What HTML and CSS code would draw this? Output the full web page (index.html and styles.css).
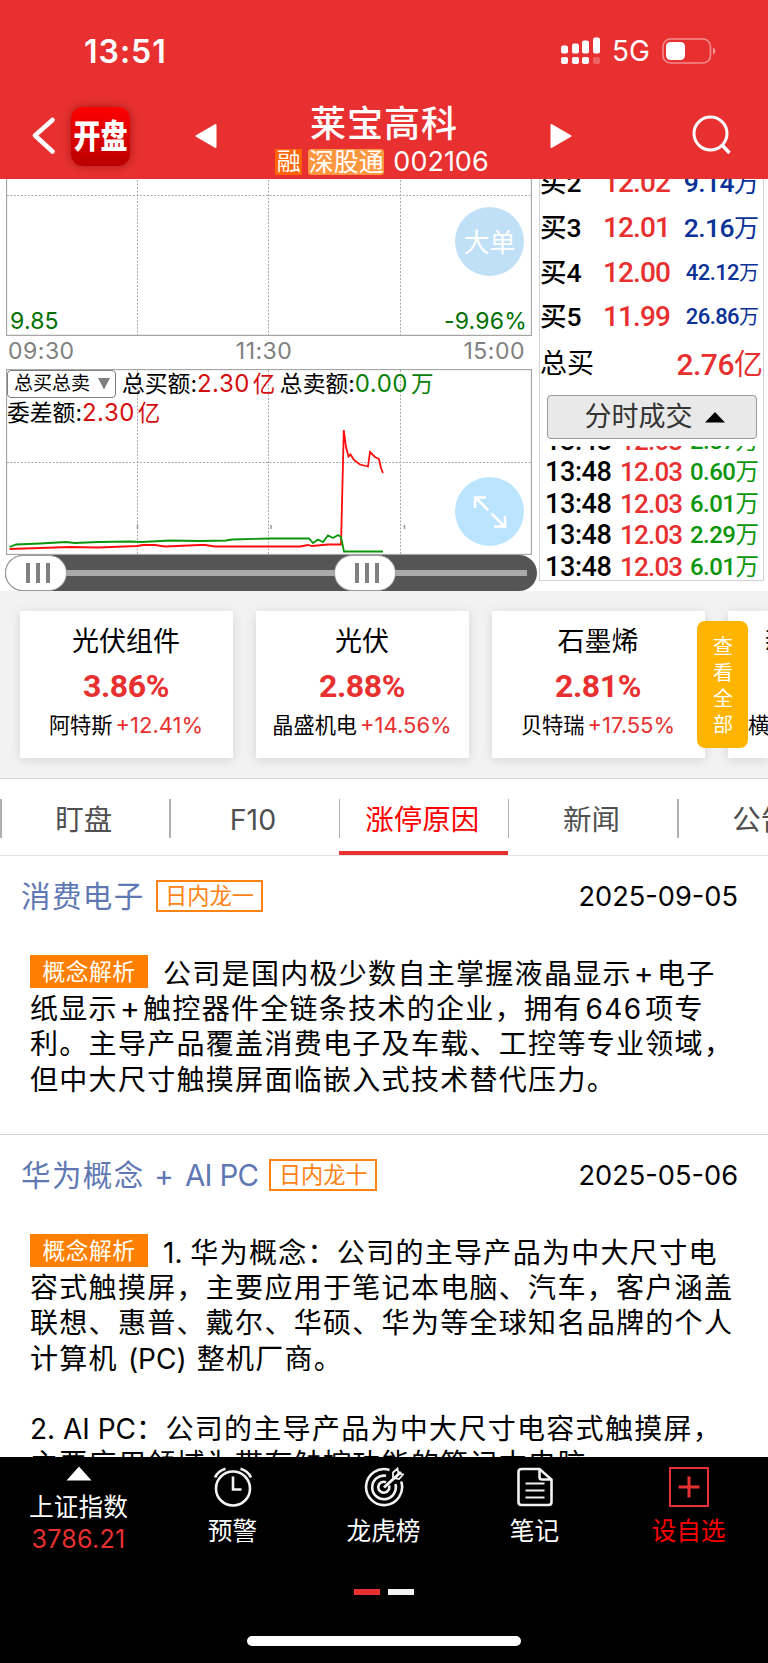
FILE: index.html
```
<!DOCTYPE html>
<html lang="zh-CN">
<head>
    <meta charset="UTF-8">
    <meta name="viewport" content="width=device-width, initial-scale=1.0">
    <title>莱宝高科 002106</title>
    <link rel="stylesheet" href="styles.css">
</head>
<body>
    <header class="header">
        <div class="status-bar">
            <div class="clock">13:51</div>
            <div class="status-icons">
                <svg class="signal" width="40" height="28" viewBox="0 0 40 28" fill="#fff">
                    <rect x="0" y="8.500" width="7" height="8" rx="2"/>
                    <rect x="11" y="6.500" width="7" height="10" rx="2"/>
                    <rect x="21" y="3.500" width="7" height="13" rx="2"/>
                    <rect x="32" y="0.500" width="7" height="16" rx="2"/>
                    <rect x="0" y="20" width="7" height="7" rx="2"/>
                    <rect x="11" y="20" width="7" height="7" rx="2"/>
                    <rect x="21" y="20" width="7" height="7" rx="2"/>
                    <rect x="32" y="20" width="7" height="7" rx="2" opacity=".25"/>
                </svg>
                <span class="network">5G</span>
                <svg class="battery" width="55" height="26" viewBox="0 0 55 26">
                    <rect x="1" y="1" width="47.500" height="24" rx="7.500" fill="none" stroke="#fff" stroke-opacity=".45" stroke-width="1.600"/>
                    <rect x="4" y="4" width="19" height="18" rx="4.500" fill="#fff"/>
                    <path d="M51 9.500q2.500 1 2.500 3.500t-2.500 3.500z" fill="#fff" fill-opacity=".5"/>
                </svg>
            </div>
        </div>
        <div class="title-bar">
            <svg class="back" width="26" height="38" viewBox="0 0 26 38"><path d="M22.500 3 5 18.500 22.500 34.500" fill="none" stroke="#fff" stroke-width="4.500" stroke-linecap="round" stroke-linejoin="round"/></svg>
            <div class="logo"><span>开盘</span></div>
            <svg class="prev" width="22" height="26" viewBox="0 0 22 26"><path d="M20.500 2v22L1.500 13z" fill="#fff" stroke="#fff" stroke-width="2" stroke-linejoin="round"/></svg>
            <div class="stock">
                <div class="stock-name">莱宝高科</div>
                <div class="stock-code"><span class="mark margin">融</span><span class="mark connect">深股通</span><span>002106</span></div>
            </div>
            <svg class="next" width="22" height="26" viewBox="0 0 22 26"><path d="M1.500 2v22L20.500 13z" fill="#fff" stroke="#fff" stroke-width="2" stroke-linejoin="round"/></svg>
            <svg class="search" width="42" height="42" viewBox="0 0 42 42" fill="none" stroke="#fff" stroke-width="3"><circle cx="19.500" cy="19.500" r="16.500"/><path d="M31 31l7.500 8" stroke-width="3.500"/></svg>
        </div>
    </header>

    <section class="market">
        <div class="charts">
            <div class="chart price-chart">
                <svg class="plot" width="526" height="157" viewBox="6 179 526 157" fill="none">
                    <path d="M6.500 179V335.500H531.500V179" stroke="#a6a6a6" stroke-width="1.300"/>
                    <path d="M7 195.500H531M137.500 180V335M268.500 180V335M400.500 180V335" stroke="#aaa" stroke-dasharray="2 1.500"/>
                </svg>
                <span class="low-price">9.85</span>
                <span class="low-rate">-9.96%</span>
                <button class="round-btn big-order">大单</button>
            </div>
            <div class="time-axis"><span>09:30</span><span>11:30</span><span>15:00</span></div>
            <div class="chart volume-chart">
                <svg class="plot" width="526" height="186" viewBox="6 369 526 186" fill="none">
                    <rect x="6.500" y="369.500" width="525" height="185" stroke="#a6a6a6" stroke-width="1.300"/>
                    <path d="M7 462.500H531M137.500 370V555M268.500 370V555M400.500 370V555" stroke="#aaa" stroke-dasharray="2 1.500"/>
                    <path d="M137.500 525v4M271 525v4M404.500 525v4" stroke="#999" stroke-width="1.500"/>
                    <polyline stroke="#ff0d0d" stroke-width="1.800" points="9.600,549 40,548 70,547 98,547.500 137,546 143,545 155,545 165,546.500 200,545 205,545 215,546.500 270,546.500 300,546.500 308,545 312,546 328,544.500 341,544.500 343.800,430 346,447 348.500,456.500 350.500,454.500 354,460 360,464.500 368,466.500 370,452 375,457 379,459 381,468 383,473"/>
                    <polyline stroke="#0a950a" stroke-width="1.800" points="9.600,547 16,544.500 40,543.500 66,542 75,543 98,542 130,541.500 142,542 170,540.500 200,541 226,540.500 232,539.500 270,538.500 309,538.500 313,543 318,539.500 323,542 328,535.500 333,538 338,535 341,537 344,551.500 383,551.500"/>
                </svg>
                <div class="totals">
                    <div class="select">总买总卖<svg width="14" height="14" viewBox="0 0 14 14"><path d="M1 1h12L7 12.500z" fill="#808080"/></svg></div>
                    <span>总买额:<i class="up">2.30<b>亿</b></i></span>
                    <span>总卖额:<i class="down">0.00<b>万</b></i></span>
                    <span class="diff">委差额:<i class="up">2.30<b>亿</b></i></span>
                </div>
                <button class="round-btn expand">
                    <svg width="34" height="34" viewBox="0 0 34 34" fill="none" stroke="#fff" stroke-width="2.600"><path d="M15.500 15.500 3 3M2 13V2.500H13M18.500 18.500 31 31M32 21V31.500H21"/></svg>
                </button>
            </div>
            <div class="slider">
                <div class="rail"></div>
                <div class="handle"><i></i><i></i><i></i></div>
                <div class="handle"><i></i><i></i><i></i></div>
            </div>
        </div>

        <div class="order-book">
            <div class="bids">
                <div class="bid"><span>买2</span><b>12.02</b><em>9.14<u>万</u></em></div>
                <div class="bid"><span>买3</span><b>12.01</b><em>2.16<u>万</u></em></div>
                <div class="bid"><span>买4</span><b>12.00</b><em class="small">42.12<u>万</u></em></div>
                <div class="bid"><span>买5</span><b>11.99</b><em class="small">26.86<u>万</u></em></div>
            </div>
            <div class="bid-total"><span>总买</span><b>2.76<u>亿</u></b></div>
            <button class="deal-btn">分时成交<svg width="20" height="11" viewBox="0 0 20 11"><path d="M0 10.500 10 0l10 10.500z"/></svg></button>
            <div class="deals">
                <div class="deal"><span>13:48</span><b>12.03</b><em>2.87<u>万</u></em></div>
                <div class="deal"><span>13:48</span><b>12.03</b><em>0.60<u>万</u></em></div>
                <div class="deal"><span>13:48</span><b>12.03</b><em>6.01<u>万</u></em></div>
                <div class="deal"><span>13:48</span><b>12.03</b><em>2.29<u>万</u></em></div>
                <div class="deal"><span>13:48</span><b>12.03</b><em>6.01<u>万</u></em></div>
            </div>
        </div>
    </section>

    <section class="concepts">
        <div class="card">
            <h3>光伏组件</h3>
            <strong>3.86%</strong>
            <p>阿特斯<span>+12.41%</span></p>
        </div>
        <div class="card">
            <h3>光伏</h3>
            <strong>2.88%</strong>
            <p>晶盛机电<span>+14.56%</span></p>
        </div>
        <div class="card">
            <h3>石墨烯</h3>
            <strong>2.81%</strong>
            <p>贝特瑞<span>+17.55%</span></p>
        </div>
        <div class="card last">
            <h3>新</h3>
            <p>横店</p>
        </div>
        <div class="view-all">查看全部</div>
    </section>

    <nav class="tabs">
        <a class="tab">盯盘</a>
        <a class="tab">F10</a>
        <a class="tab active">涨停原因</a>
        <a class="tab">新闻</a>
        <a class="tab">公告</a>
    </nav>

    <main class="reasons">
        <article class="reason">
            <div class="reason-head">
                <h2>消费电子</h2>
                <span class="rank">日内龙一</span>
                <time>2025-09-05</time>
            </div>
            <p><span class="tag">概念解析</span>公司是国内极少数自主掌握液晶显示<i class="plus">+</i>电子<br>纸显示<i class="plus">+</i>触控器件全链条技术的企业，拥有<i class="num">646</i>项专<br>利。主导产品覆盖消费电子及车载、工控等专业领域，<br>但中大尺寸触摸屏面临嵌入式技术替代压力。</p>
        </article>
        <article class="reason">
            <div class="reason-head">
                <h2>华为概念 + <span class="latin">AI PC</span></h2>
                <span class="rank">日内龙十</span>
                <time>2025-05-06</time>
            </div>
            <p><span class="tag">概念解析</span><span class="latin">1. </span>华为概念：公司的主导产品为中大尺寸电<br>容式触摸屏，主要应用于笔记本电脑、汽车，客户涵盖<br>联想、惠普、戴尔、华硕、华为等全球知名品牌的个人<br>计算机<span class="latin pc">(PC)</span>整机厂商。</p>
            <p><span class="latin">2. AI PC</span>：公司的主导产品为中大尺寸电容式触摸屏，<br>主要应用领域为带有触控功能的笔记本电脑。</p>
        </article>
    </main>

    <footer class="bottom">
        <div class="bottom-nav">
            <div class="index">
                <svg width="26" height="15" viewBox="0 0 26 15"><path d="M0.500 14.500 13 0.500 25.500 14.500z" fill="#fff"/></svg>
                <div>上证指数</div>
                <div class="index-value">3786.21</div>
            </div>
            <div class="item">
                <svg width="40" height="40" viewBox="0 0 40 40" fill="none" stroke="#f2f2f2" stroke-width="2.600"><circle cx="20" cy="21.500" r="17"/><path d="M20 9.500V22.500H28.500M2 10.500Q5 4 12.500 1.800M38 10.500Q35 4 27.500 1.800"/></svg>
                <span>预警</span>
            </div>
            <div class="item">
                <svg width="40" height="40" viewBox="0 0 40 40" fill="none" stroke="#f2f2f2" stroke-width="2.600"><path d="M25.500 2.900A18 18 0 1 0 37.200 14.500M22 8.800A11.800 11.800 0 1 0 31.300 17M22 15.200A5.500 5.500 0 1 0 25 18.500"/><path d="M20 20.500 37 5" stroke-width="3"/><path d="M29 10.500V5.500L33.500 1.500 34.500 6.500 39 7.500 35 12 29.500 11z" stroke-width="1.800"/></svg>
                <span>龙虎榜</span>
            </div>
            <div class="item">
                <svg width="40" height="40" viewBox="0 0 40 40" fill="none" stroke="#f2f2f2" stroke-width="2.600"><path d="M24.500 2H6.500Q3.500 2 3.500 5V35Q3.500 38 6.500 38H33.500Q36.500 38 36.500 35V12.500zM24.500 2V10Q24.500 12.500 27 12.500H36.500"/><path d="M10.500 16.500H29.500M10.500 23.500H29.500M10.500 30.500H29.500" stroke-width="2.200"/></svg>
                <span>笔记</span>
            </div>
            <div class="item add">
                <svg width="40" height="40" viewBox="0 0 40 40" fill="none" stroke="#e83030" stroke-width="2"><rect x="1" y="1" width="38" height="38"/><path d="M20 9.500V30.500M9.500 20H30.500" stroke-width="3"/></svg>
                <span>设自选</span>
            </div>
        </div>
        <div class="pager"><i class="on"></i><i></i></div>
        <div class="home-bar"></div>
    </footer>
</body>
</html>
```
FILE: styles.css
```
* {
    box-sizing: border-box;
}
body {
    margin: 0;
    width: 768px;
    height: 1663px;
    overflow: hidden;
    display: flex;
    flex-direction: column;
    background: #fff;
    color: #000;
    font-family: Inter, "Noto Sans CJK SC", sans-serif;
    white-space: nowrap;
}
svg {
    display: block;
    flex: none;
}
i, em {
    font-style: normal;
}
u {
    text-decoration: none;
}
h2, h3, p {
    margin: 0;
    font-weight: 400;
}
button {
    font-family: inherit;
    padding: 0;
}

/* header */
.header {
    flex: none;
    height: 179px;
    background: #e83030;
    color: #fff;
}
.status-bar {
    display: flex;
    justify-content: space-between;
    height: 102px;
    padding: 0 51px 0 84px;
}
.clock {
    font-size: 32px;
    font-weight: 600;
    line-height: 104px;
    letter-spacing: 1px;
}
.status-icons {
    display: flex;
    align-items: center;
}
.network {
    width: 49px;
    margin-left: 11px;
    font-size: 28px;
    line-height: 106px;
}
.battery {
    margin-left: 1px;
}
.title-bar {
    display: flex;
    align-items: flex-start;
    height: 77px;
    padding-left: 30px;
}
.back {
    margin-top: 15px;
}
.logo {
    width: 59px;
    height: 59px;
    margin: 5px 65px 0 15px;
    border-radius: 12px;
    background: linear-gradient(#f00, #b90000);
    box-shadow: 0 0 8px rgba(100, 0, 0, .5);
    font-size: 27px;
    font-weight: 900;
    line-height: 60px;
    text-align: center;
}
.logo span {
    display: inline-block;
    transform: scaleY(1.2);
}
.prev, .next {
    margin-top: 21px;
}
.stock {
    width: 333px;
    text-align: center;
}
.stock-name {
    height: 44px;
    padding-left: 1px;
    font-size: 36px;
    font-weight: 500;
    line-height: 44px;
    letter-spacing: 1px;
}
.stock-code {
    display: flex;
    align-items: center;
    justify-content: center;
    padding-right: 3px;
    font-size: 26px;
    line-height: 31px;
}
.mark {
    line-height: 26px;
    text-align: center;
}
.margin {
    width: 27px;
    margin-right: 6px;
    background: #ff6400;
    font-size: 24px;
}
.connect {
    width: 76px;
    margin-right: 9px;
    border-radius: 3px;
    background: #ff9640;
    font-size: 25px;
}
.stock-code span:last-child {
    font-size: 27px;
}
.search {
    margin: 12px 0 0 119px;
}

/* charts */
.market {
    flex: none;
    display: flex;
    height: 412px;
}
.charts {
    width: 539px;
    padding-left: 6px;
}
.chart {
    position: relative;
    width: 526px;
}
.price-chart {
    height: 157px;
}
.volume-chart {
    height: 186px;
}
.plot {
    position: absolute;
    left: 0;
    top: 0;
}
.low-price, .low-rate {
    position: absolute;
    bottom: 1px;
    color: #007000;
    font-size: 23px;
    line-height: 28px;
    letter-spacing: .2px;
}
.low-price {
    left: 4px;
}
.low-rate {
    right: 5px;
}
.round-btn {
    position: absolute;
    right: 8px;
    width: 69px;
    height: 69px;
    border: 0;
    border-radius: 50%;
    display: flex;
    align-items: center;
    justify-content: center;
    color: #fff;
    font-size: 26px;
}
.big-order {
    top: 28px;
    padding-bottom: 2px;
    background: #c0e0f8;
}
.expand {
    top: 108px;
    background: #bbe4ff;
}
.time-axis {
    display: flex;
    justify-content: space-between;
    width: 519px;
    height: 33px;
    padding-left: 2px;
    color: #808080;
    font-size: 23px;
    line-height: 31px;
    letter-spacing: .5px;
}
.time-axis span:nth-child(2) {
    margin-right: 10px;
}
.totals {
    position: relative;
    display: flex;
    flex-wrap: wrap;
    align-items: center;
    height: 60px;
    padding: 0 0 2px 1px;
    font-size: 22.800px;
    line-height: 29px;
}
.totals > span {
    margin-right: 4px;
}
.totals i {
    font-size: 24px;
    letter-spacing: .5px;
}
.totals b {
    margin-left: 3px;
    font-size: 22.500px;
    font-weight: 400;
}
.select {
    display: flex;
    align-items: center;
    justify-content: space-between;
    width: 109px;
    height: 28px;
    margin-right: 6px;
    padding: 0 4px 0 6px;
    border: 1.500px solid #808080;
    border-radius: 4px;
    background: #fff;
    font-size: 19px;
}
.totals .diff {
    width: 300px;
}
.up {
    color: #d60d0d;
}
.down {
    color: #0a800a;
}
.slider {
    position: relative;
    display: flex;
    gap: 267px;
    width: 532px;
    height: 36px;
    margin-left: -1px;
    border-radius: 18px;
    background: #555;
}
.rail {
    position: absolute;
    left: 40px;
    top: 15px;
    width: 482px;
    height: 6px;
    background: #aaa;
}
.handle {
    position: relative;
    display: flex;
    align-items: center;
    justify-content: center;
    gap: 6px;
    width: 62px;
    height: 36px;
    padding-left: 3px;
    border: 1.500px solid #999;
    border-radius: 18px;
    background: #fff;
}
.handle i {
    width: 4px;
    height: 20px;
    background: #808080;
}

/* order book */
.order-book {
    display: flex;
    flex-direction: column;
    width: 225px;
    height: 402px;
    border: 1px solid #d2d2d2;
    border-top: 0;
    font-family: Roboto, "Noto Sans CJK SC", sans-serif;
}
.order-book b, .order-book em {
    font-weight: 500;
}
.order-book u {
    font-weight: 400;
    letter-spacing: 0;
}
.bids {
    display: flex;
    flex-direction: column;
    justify-content: flex-end;
    height: 160px;
    overflow: hidden;
}
.bid {
    flex: none;
    display: grid;
    grid-template-columns: 63px 76px 80px;
    height: 44.700px;
    font-size: 26.500px;
    line-height: 46px;
}
.bid span {
    font-weight: 500;
}
.bid b {
    color: #e83030;
    font-size: 28px;
    letter-spacing: -.9px;
}
.bid em {
    color: #0a3296;
    text-align: right;
    font-size: 26.500px;
    letter-spacing: -.6px;
}
.bid u {
    font-size: 25px;
}
.bid em.small {
    font-size: 22px;
    letter-spacing: -.6px;
}
.small u {
    font-size: 20px;
}
.bid-total {
    display: flex;
    justify-content: space-between;
    height: 56px;
    font-size: 27px;
    line-height: 51px;
}
.bid-total b {
    color: #e83030;
    font-size: 30px;
    letter-spacing: -.5px;
}
.bid-total u {
    font-size: 29px;
}
.deal-btn {
    display: flex;
    flex: none;
    align-items: center;
    justify-content: center;
    gap: 12px;
    width: 210px;
    height: 44px;
    margin: 0 0 7px 7px;
    padding-left: 5px;
    border: 1.500px solid #999;
    border-radius: 4px;
    background: #e9e9e9;
    color: #333;
    font-size: 27px;
    line-height: 38px;
}
.deals {
    display: flex;
    flex-direction: column;
    justify-content: flex-end;
    height: 134px;
    padding-left: 5px;
    overflow: hidden;
}
.deal {
    flex: none;
    display: grid;
    grid-template-columns: 75px 66px 73px;
    height: 31.500px;
    font-size: 27px;
    line-height: 36px;
}
.deal span {
    font-weight: 500;
    letter-spacing: -.4px;
}
.deal b {
    color: #e83030;
    font-size: 26px;
    letter-spacing: -.8px;
}
.deal em {
    color: #0a960a;
    text-align: right;
    font-size: 24px;
    letter-spacing: -.5px;
}
.deal u {
    font-size: 23.500px;
}

/* concept cards */
.concepts {
    position: relative;
    flex: none;
    display: flex;
    gap: 23px;
    height: 188px;
    padding: 20px 0 0 20px;
    border-bottom: 1.500px solid #d8d8d8;
    background: #f2f2f2;
    overflow: hidden;
}
.card {
    flex: none;
    width: 213px;
    height: 147px;
    padding: 12px 1px 0 0;
    background: #fff;
    box-shadow: 0 2px 10px rgba(0, 0, 0, .12);
    text-align: center;
}
.card h3 {
    font-size: 27px;
    line-height: 38px;
}
.card strong {
    display: block;
    color: #e83030;
    font-family: Roboto, sans-serif;
    font-size: 32px;
    line-height: 50px;
    letter-spacing: -.4px;
}
.card p {
    font-size: 21.200px;
    line-height: 28px;
}
.card p span {
    margin-left: 3px;
    color: #e83030;
    font-size: 22px;
}
.card.last {
    width: 40px;
    padding-left: 20px;
    text-align: left;
    overflow: hidden;
}
.last h3 {
    margin: 0 0 50px 17px;
}
.view-all {
    position: absolute;
    left: 697px;
    top: 30px;
    width: 51px;
    height: 127px;
    padding: 13px 15px 0 16px;
    border-radius: 8px;
    background: #ffb400;
    color: #fff;
    font-size: 20px;
    line-height: 26px;
    white-space: normal;
}

/* tabs */
.tabs {
    flex: none;
    display: flex;
    height: 77px;
    border-bottom: 1px solid #e4e4e4;
    overflow: hidden;
}
.tab {
    position: relative;
    flex: none;
    width: 169.300px;
    padding-right: 2px;
    color: #505050;
    font-size: 28.500px;
    line-height: 81px;
    text-align: center;
}
.tab::before {
    content: "";
    position: absolute;
    left: 0;
    top: 20px;
    width: 1.500px;
    height: 39px;
    background: #b0b0b0;
}
.tab.active {
    height: 76px;
    border-bottom: 4px solid #e83030;
    color: #f00;
}

/* limit-up reasons */
.reasons {
    flex: 1;
    overflow: hidden;
}
.reason {
    height: 279px;
    border-bottom: 1.500px solid #d2d2d2;
}
.reason + .reason {
    height: auto;
}
.reason-head {
    display: flex;
    align-items: center;
    height: 80px;
    padding: 0 30px 0 21px;
}
.reason-head h2 {
    color: #5f78b4;
    font-size: 29.500px;
    line-height: 40px;
    letter-spacing: 1.400px;
}
.reason-head .latin {
    letter-spacing: -.7px;
}
.rank {
    height: 32px;
    margin-left: 11px;
    padding: 0 7.500px;
    border: 2px solid #ff8214;
    color: #ff8214;
    font-size: 22.200px;
    line-height: 28px;
}
.reason-head time {
    margin-left: auto;
    font-size: 27.200px;
}
.reason p {
    padding: 21px 0 0 30px;
    font-size: 28px;
    line-height: 35.200px;
    letter-spacing: 1.300px;
}
.reason p + p {
    padding-top: 35px;
}
.reason p .latin {
    letter-spacing: 0;
}
.reason p .pc {
    margin: 0 10px 0 10px;
}
.tag {
    position: relative;
    top: -4px;
    display: inline-block;
    width: 118px;
    height: 33px;
    margin: -4px 15px 0 0;
    background: #ff8000;
    color: #fff;
    font-size: 22.800px;
    line-height: 33px;
    letter-spacing: .5px;
    text-align: center;
}
.plus {
    margin: 0 2px;
    font-size: 30px;
    line-height: 1;
}
.num {
    margin: 0 3px;
}

/* bottom bar */
.bottom {
    flex: none;
    height: 206px;
    background: #000;
    color: #fff;
}
.bottom-nav {
    display: flex;
    height: 132px;
    font-size: 24.700px;
}
.bottom-nav > div {
    display: flex;
    flex-direction: column;
    align-items: center;
    width: 151px;
    padding-top: 10px;
}
.bottom-nav > .index {
    width: 157px;
    padding-top: 9px;
    line-height: 32px;
}
.index svg {
    margin-bottom: 10px;
}
.index-value {
    font-size: 25px;
    letter-spacing: .3px;
    color: #e83030;
}
.item span {
    margin-top: 8px;
    line-height: 32px;
}
.bottom-nav > .add {
    width: 157px;
    color: #f00;
}
.pager {
    display: flex;
    justify-content: center;
    gap: 8px;
}
.pager i {
    width: 26px;
    height: 6px;
    background: #f2f2f2;
}
.pager .on {
    background: #e83030;
}
.home-bar {
    width: 274px;
    height: 10px;
    margin: 41px auto 0;
    border-radius: 5px;
    background: #fff;
}
```
